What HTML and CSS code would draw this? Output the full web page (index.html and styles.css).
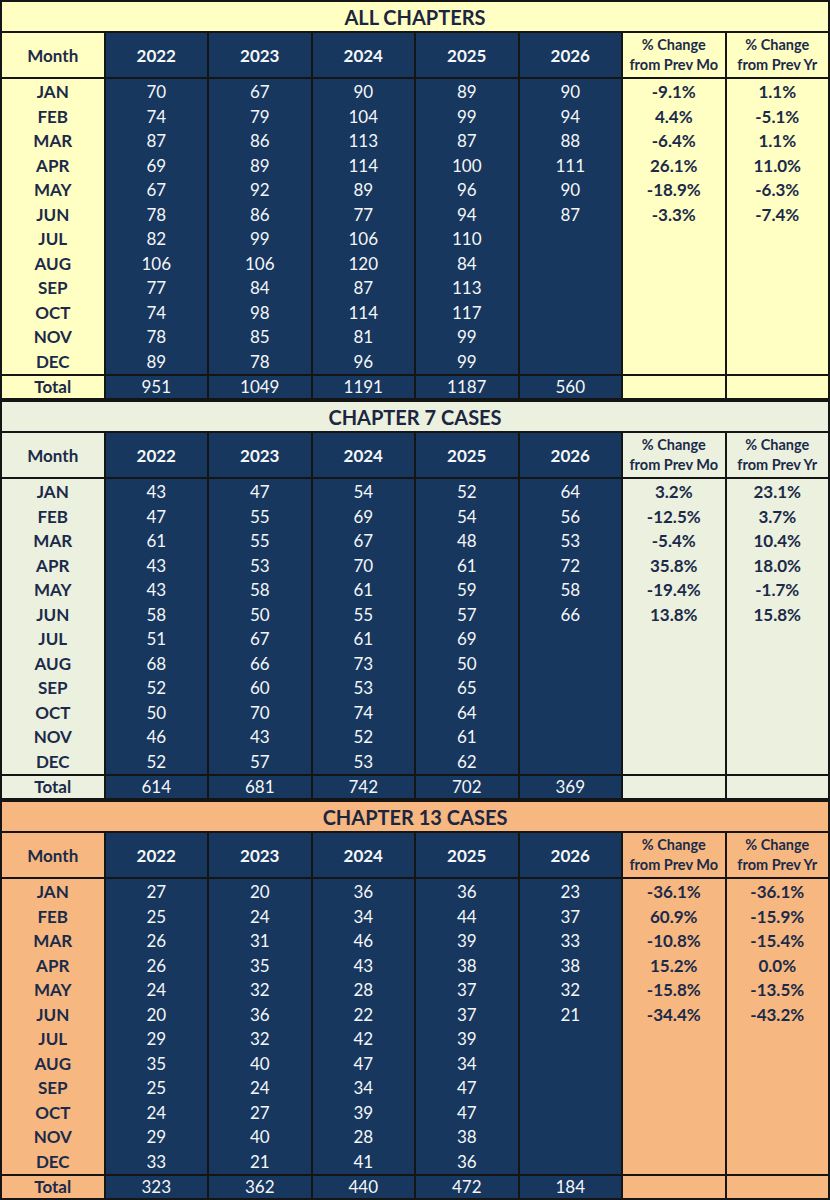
FILE: index.html
```html
<!DOCTYPE html>
<html>
<head>
<meta charset="utf-8">
<link rel="stylesheet" href="styles.css">
</head>
<body>
<table class="sheet yellow">
<colgroup><col><col><col><col><col><col><col><col></colgroup>
<tr class="title"><td colspan="8">ALL CHAPTERS</td></tr>
<tr class="head"><td class="lab">Month</td><td class="nv">2022</td><td class="nv">2023</td><td class="nv">2024</td><td class="nv">2025</td><td class="nv">2026</td><td class="pct">% Change<br>from Prev Mo</td><td class="pct">% Change<br>from Prev Yr</td></tr>
<tr class="row first"><td class="lab">JAN</td><td class="nv">70</td><td class="nv">67</td><td class="nv">90</td><td class="nv">89</td><td class="nv">90</td><td class="pc">-9.1%</td><td class="pc">1.1%</td></tr>
<tr class="row"><td class="lab">FEB</td><td class="nv">74</td><td class="nv">79</td><td class="nv">104</td><td class="nv">99</td><td class="nv">94</td><td class="pc">4.4%</td><td class="pc">-5.1%</td></tr>
<tr class="row"><td class="lab">MAR</td><td class="nv">87</td><td class="nv">86</td><td class="nv">113</td><td class="nv">87</td><td class="nv">88</td><td class="pc">-6.4%</td><td class="pc">1.1%</td></tr>
<tr class="row"><td class="lab">APR</td><td class="nv">69</td><td class="nv">89</td><td class="nv">114</td><td class="nv">100</td><td class="nv">111</td><td class="pc">26.1%</td><td class="pc">11.0%</td></tr>
<tr class="row"><td class="lab">MAY</td><td class="nv">67</td><td class="nv">92</td><td class="nv">89</td><td class="nv">96</td><td class="nv">90</td><td class="pc">-18.9%</td><td class="pc">-6.3%</td></tr>
<tr class="row"><td class="lab">JUN</td><td class="nv">78</td><td class="nv">86</td><td class="nv">77</td><td class="nv">94</td><td class="nv">87</td><td class="pc">-3.3%</td><td class="pc">-7.4%</td></tr>
<tr class="row"><td class="lab">JUL</td><td class="nv">82</td><td class="nv">99</td><td class="nv">106</td><td class="nv">110</td><td class="nv"></td><td class="pc"></td><td class="pc"></td></tr>
<tr class="row"><td class="lab">AUG</td><td class="nv">106</td><td class="nv">106</td><td class="nv">120</td><td class="nv">84</td><td class="nv"></td><td class="pc"></td><td class="pc"></td></tr>
<tr class="row"><td class="lab">SEP</td><td class="nv">77</td><td class="nv">84</td><td class="nv">87</td><td class="nv">113</td><td class="nv"></td><td class="pc"></td><td class="pc"></td></tr>
<tr class="row"><td class="lab">OCT</td><td class="nv">74</td><td class="nv">98</td><td class="nv">114</td><td class="nv">117</td><td class="nv"></td><td class="pc"></td><td class="pc"></td></tr>
<tr class="row"><td class="lab">NOV</td><td class="nv">78</td><td class="nv">85</td><td class="nv">81</td><td class="nv">99</td><td class="nv"></td><td class="pc"></td><td class="pc"></td></tr>
<tr class="row last"><td class="lab">DEC</td><td class="nv">89</td><td class="nv">78</td><td class="nv">96</td><td class="nv">99</td><td class="nv"></td><td class="pc"></td><td class="pc"></td></tr>
<tr class="total"><td class="lab">Total</td><td class="nv">951</td><td class="nv">1049</td><td class="nv">1191</td><td class="nv">1187</td><td class="nv">560</td><td class="pc"></td><td class="pc"></td></tr>
</table>

<table class="sheet green">
<colgroup><col><col><col><col><col><col><col><col></colgroup>
<tr class="title"><td colspan="8">CHAPTER 7 CASES</td></tr>
<tr class="head"><td class="lab">Month</td><td class="nv">2022</td><td class="nv">2023</td><td class="nv">2024</td><td class="nv">2025</td><td class="nv">2026</td><td class="pct">% Change<br>from Prev Mo</td><td class="pct">% Change<br>from Prev Yr</td></tr>
<tr class="row first"><td class="lab">JAN</td><td class="nv">43</td><td class="nv">47</td><td class="nv">54</td><td class="nv">52</td><td class="nv">64</td><td class="pc">3.2%</td><td class="pc">23.1%</td></tr>
<tr class="row"><td class="lab">FEB</td><td class="nv">47</td><td class="nv">55</td><td class="nv">69</td><td class="nv">54</td><td class="nv">56</td><td class="pc">-12.5%</td><td class="pc">3.7%</td></tr>
<tr class="row"><td class="lab">MAR</td><td class="nv">61</td><td class="nv">55</td><td class="nv">67</td><td class="nv">48</td><td class="nv">53</td><td class="pc">-5.4%</td><td class="pc">10.4%</td></tr>
<tr class="row"><td class="lab">APR</td><td class="nv">43</td><td class="nv">53</td><td class="nv">70</td><td class="nv">61</td><td class="nv">72</td><td class="pc">35.8%</td><td class="pc">18.0%</td></tr>
<tr class="row"><td class="lab">MAY</td><td class="nv">43</td><td class="nv">58</td><td class="nv">61</td><td class="nv">59</td><td class="nv">58</td><td class="pc">-19.4%</td><td class="pc">-1.7%</td></tr>
<tr class="row"><td class="lab">JUN</td><td class="nv">58</td><td class="nv">50</td><td class="nv">55</td><td class="nv">57</td><td class="nv">66</td><td class="pc">13.8%</td><td class="pc">15.8%</td></tr>
<tr class="row"><td class="lab">JUL</td><td class="nv">51</td><td class="nv">67</td><td class="nv">61</td><td class="nv">69</td><td class="nv"></td><td class="pc"></td><td class="pc"></td></tr>
<tr class="row"><td class="lab">AUG</td><td class="nv">68</td><td class="nv">66</td><td class="nv">73</td><td class="nv">50</td><td class="nv"></td><td class="pc"></td><td class="pc"></td></tr>
<tr class="row"><td class="lab">SEP</td><td class="nv">52</td><td class="nv">60</td><td class="nv">53</td><td class="nv">65</td><td class="nv"></td><td class="pc"></td><td class="pc"></td></tr>
<tr class="row"><td class="lab">OCT</td><td class="nv">50</td><td class="nv">70</td><td class="nv">74</td><td class="nv">64</td><td class="nv"></td><td class="pc"></td><td class="pc"></td></tr>
<tr class="row"><td class="lab">NOV</td><td class="nv">46</td><td class="nv">43</td><td class="nv">52</td><td class="nv">61</td><td class="nv"></td><td class="pc"></td><td class="pc"></td></tr>
<tr class="row last"><td class="lab">DEC</td><td class="nv">52</td><td class="nv">57</td><td class="nv">53</td><td class="nv">62</td><td class="nv"></td><td class="pc"></td><td class="pc"></td></tr>
<tr class="total"><td class="lab">Total</td><td class="nv">614</td><td class="nv">681</td><td class="nv">742</td><td class="nv">702</td><td class="nv">369</td><td class="pc"></td><td class="pc"></td></tr>
</table>

<table class="sheet orange">
<colgroup><col><col><col><col><col><col><col><col></colgroup>
<tr class="title"><td colspan="8">CHAPTER 13 CASES</td></tr>
<tr class="head"><td class="lab">Month</td><td class="nv">2022</td><td class="nv">2023</td><td class="nv">2024</td><td class="nv">2025</td><td class="nv">2026</td><td class="pct">% Change<br>from Prev Mo</td><td class="pct">% Change<br>from Prev Yr</td></tr>
<tr class="row first"><td class="lab">JAN</td><td class="nv">27</td><td class="nv">20</td><td class="nv">36</td><td class="nv">36</td><td class="nv">23</td><td class="pc">-36.1%</td><td class="pc">-36.1%</td></tr>
<tr class="row"><td class="lab">FEB</td><td class="nv">25</td><td class="nv">24</td><td class="nv">34</td><td class="nv">44</td><td class="nv">37</td><td class="pc">60.9%</td><td class="pc">-15.9%</td></tr>
<tr class="row"><td class="lab">MAR</td><td class="nv">26</td><td class="nv">31</td><td class="nv">46</td><td class="nv">39</td><td class="nv">33</td><td class="pc">-10.8%</td><td class="pc">-15.4%</td></tr>
<tr class="row"><td class="lab">APR</td><td class="nv">26</td><td class="nv">35</td><td class="nv">43</td><td class="nv">38</td><td class="nv">38</td><td class="pc">15.2%</td><td class="pc">0.0%</td></tr>
<tr class="row"><td class="lab">MAY</td><td class="nv">24</td><td class="nv">32</td><td class="nv">28</td><td class="nv">37</td><td class="nv">32</td><td class="pc">-15.8%</td><td class="pc">-13.5%</td></tr>
<tr class="row"><td class="lab">JUN</td><td class="nv">20</td><td class="nv">36</td><td class="nv">22</td><td class="nv">37</td><td class="nv">21</td><td class="pc">-34.4%</td><td class="pc">-43.2%</td></tr>
<tr class="row"><td class="lab">JUL</td><td class="nv">29</td><td class="nv">32</td><td class="nv">42</td><td class="nv">39</td><td class="nv"></td><td class="pc"></td><td class="pc"></td></tr>
<tr class="row"><td class="lab">AUG</td><td class="nv">35</td><td class="nv">40</td><td class="nv">47</td><td class="nv">34</td><td class="nv"></td><td class="pc"></td><td class="pc"></td></tr>
<tr class="row"><td class="lab">SEP</td><td class="nv">25</td><td class="nv">24</td><td class="nv">34</td><td class="nv">47</td><td class="nv"></td><td class="pc"></td><td class="pc"></td></tr>
<tr class="row"><td class="lab">OCT</td><td class="nv">24</td><td class="nv">27</td><td class="nv">39</td><td class="nv">47</td><td class="nv"></td><td class="pc"></td><td class="pc"></td></tr>
<tr class="row"><td class="lab">NOV</td><td class="nv">29</td><td class="nv">40</td><td class="nv">28</td><td class="nv">38</td><td class="nv"></td><td class="pc"></td><td class="pc"></td></tr>
<tr class="row last"><td class="lab">DEC</td><td class="nv">33</td><td class="nv">21</td><td class="nv">41</td><td class="nv">36</td><td class="nv"></td><td class="pc"></td><td class="pc"></td></tr>
<tr class="total"><td class="lab">Total</td><td class="nv">323</td><td class="nv">362</td><td class="nv">440</td><td class="nv">472</td><td class="nv">184</td><td class="pc"></td><td class="pc"></td></tr>
</table>
</body>
</html>
```

FILE: styles.css
```css
html, body {
  margin: 0;
  padding: 0;
  background: #ffffff;
}
body {
  font-family: Lato, "Liberation Sans", sans-serif;
  color: #1c2a4a;
}
.sheet {
  width: 830px;
  table-layout: fixed;
  border-collapse: collapse;
  margin: 0;
}
.sheet td {
  padding: 0;
  text-align: center;
  vertical-align: middle;
  border-left: 2px solid #151515;
  border-right: 2px solid #151515;
  white-space: nowrap;
  overflow: hidden;
}
.yellow .lab, .yellow .pc, .yellow .pct, .yellow .title td { background: #ffffc3; }
.green .lab, .green .pc, .green .pct, .green .title td { background: #ebf1de; }
.orange .lab, .orange .pc, .orange .pct, .orange .title td { background: #f6b880; }

.title td {
  height: 29px;
  border: 2px solid #151515;
  font-size: 20px;
  font-weight: 700;
  color: #1c2640;
  line-height: 28px;
}
.head td {
  height: 44px;
  border-top: 2px solid #151515;
  border-bottom: 2px solid #151515;
  font-weight: 700;
  font-size: 17px;
}
.head .lab { color: #1c2a4a; }
.head .pct {
  font-size: 14.5px;
  line-height: 20px;
  color: #1c2a4a;
}
.nv {
  background: #17375e;
  color: #f4f6f8;
}
.row td {
  height: 24.5px;
  font-size: 17px;
  line-height: 20px;
}
.row.first td { padding-top: 1px; }
.row .lab, .total .lab { font-weight: 700; }
.row .pc { font-weight: 700; }
.total td {
  height: 22px;
  border-top: 2px solid #151515;
  border-bottom: 2px solid #151515;
  font-size: 17px;
  line-height: 20px;
}
```
